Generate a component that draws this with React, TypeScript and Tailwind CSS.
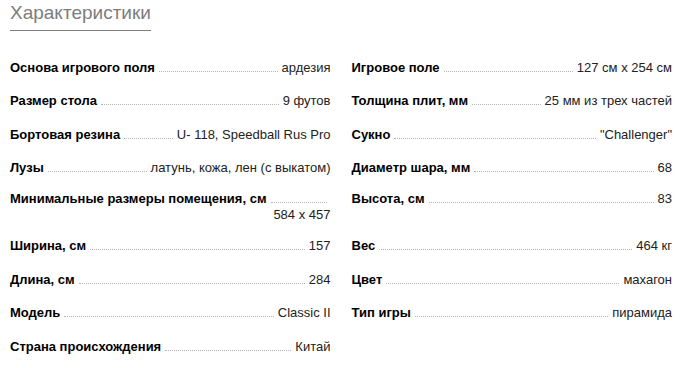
const SPECS: { label: string; value: string; tight?: boolean }[] = [
  { label: "Основа игрового поля", value: "ардезия" },
  { label: "Игровое поле", value: "127 см x 254 см" },
  { label: "Размер стола", value: "9 футов" },
  { label: "Толщина плит, мм", value: "25 мм из трех частей" },
  { label: "Бортовая резина", value: "U- 118, Speedball Rus Pro" },
  { label: "Сукно", value: "\"Challenger\"" },
  { label: "Лузы", value: "латунь, кожа, лен (с выкатом)" },
  { label: "Диаметр шара, мм", value: "68" },
  { label: "Минимальные размеры помещения, см", value: "584 x 457", tight: true },
  { label: "Высота, см", value: "83", tight: true },
  { label: "Ширина, см", value: "157" },
  { label: "Вес", value: "464 кг" },
  { label: "Длина, см", value: "284" },
  { label: "Цвет", value: "махагон" },
  { label: "Модель", value: "Classic II" },
  { label: "Тип игры", value: "пирамида" },
  { label: "Страна происхождения", value: "Китай" },
];

function SpecRow({ label, value, tight }: { label: string; value: string; tight?: boolean }) {
  return (
    <div className={`flex flex-wrap leading-[16px] text-[13px] ${tight ? "-my-[2.7px]" : ""}`}>
      <span className="font-bold text-black">{label}</span>
      <span className="flex-1 basis-[20px] self-end mx-[4px] mb-[4px] border-b border-dotted border-[#b5b5b5]" />
      <span className="ml-auto text-[#222]">{value}</span>
    </div>
  );
}

export default function App() {
  return (
    <div className="w-[686px] h-[368px] bg-white pl-[10px] pr-[14px] pt-[2px] font-['Liberation_Sans',Arial,sans-serif]">
      {/* Title */}
      <div className="inline-block border-b border-[#808080] pb-[6px]">
        <h2 className="text-[19px] leading-[22px] text-[#7d7d7d]">Характеристики</h2>
      </div>

      {/* Specs grid */}
      <div className="grid grid-cols-2 gap-x-[21px] gap-y-[17.6px] mt-[28.6px] items-start">
        {SPECS.map((s) => (
          <SpecRow key={s.label} label={s.label} value={s.value} tight={s.tight} />
        ))}
      </div>
    </div>
  );
}
